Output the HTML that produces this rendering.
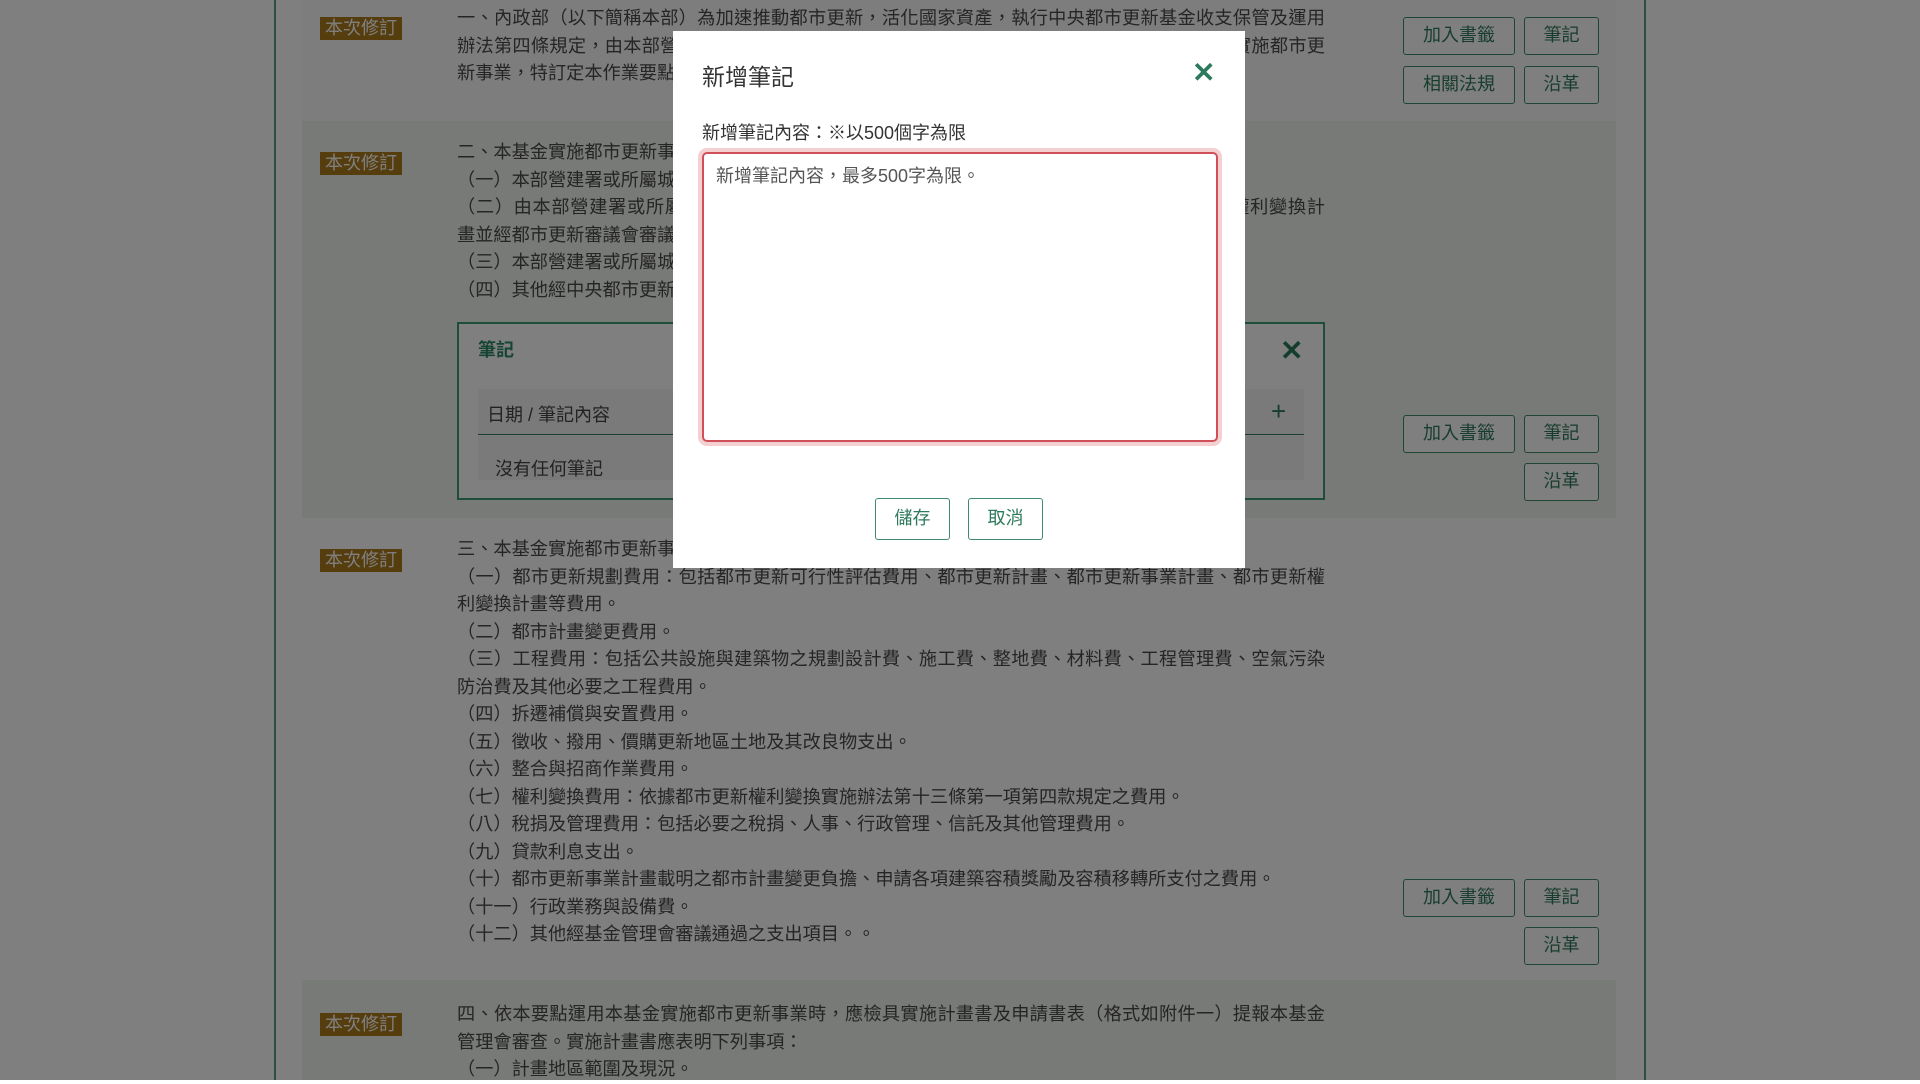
<!DOCTYPE html>
<html><head><meta charset="utf-8"><style>
*{box-sizing:border-box;margin:0;padding:0}
body{width:1920px;height:1080px;overflow:hidden;background:#fff;font-family:"Liberation Sans","Noto Sans CJK TC",sans-serif;position:relative;color:#555}
.wrap{position:absolute;left:274px;top:0;width:1372px;height:1080px;border-left:2px solid #5c9c84;border-right:2px solid #5c9c84;background:#fff}
.row{position:absolute;left:302px;width:1314px}
.badge{position:absolute;left:320px;width:82px;height:23px;background:#ab7a1c;color:#fff;font-size:18px;line-height:23px;text-align:center}
.txt{position:absolute;left:457px;width:868px;font-size:18.2px;line-height:27.5px;color:#4a4a4a;white-space:nowrap}
.txt .j{display:block;text-align:justify;text-align-last:justify;text-justify:inter-character}
.btn{position:absolute;height:38px;border:1.5px solid #3f8a6c;border-radius:3px;background:#fff;color:#2e7a5c;font-size:18px;line-height:35px;text-align:center}
.overlay{position:absolute;left:0;top:0;width:1920px;height:1080px;background:rgba(0,0,0,.5)}
.dlg{position:absolute;left:673px;top:31px;width:572px;height:537px;background:#fff}
</style></head><body>
<div class="wrap"></div>
<div class="row" style="top:0;height:121px;background:#fbfbfb"></div>
<div class="row" style="top:121px;height:397px;background:#f0f4ee"></div>
<div class="row" style="top:518px;height:462px;background:#fff"></div>
<div class="row" style="top:980px;height:100px;background:#f0f4ee"></div>

<div class="badge" style="top:17px">本次修訂</div>
<div class="txt" style="top:5px"><span class="j">一、內政部（以下簡稱本部）為加速推動都市更新，活化國家資產，執行中央都市更新基金收支保管及運用</span><span class="j">辦法第四條規定，由本部營建署或所屬城鄉發展分署（以下簡稱城鄉分署）辦理公辦都市更新及實施都市更</span>新事業，特訂定本作業要點。</div>
<div class="btn" style="left:1403px;top:17px;width:112px">加入書籤</div>
<div class="btn" style="left:1524px;top:17px;width:75px">筆記</div>
<div class="btn" style="left:1403px;top:66px;width:112px">相關法規</div>
<div class="btn" style="left:1524px;top:66px;width:75px">沿革</div>

<div class="badge" style="top:152px">本次修訂</div>
<div class="txt" style="top:139px">二、本基金實施都市更新事業之範圍如下：<br>（一）本部營建署或所屬城鄉分署擔任實施者。<br><span class="j">（二）由本部營建署或所屬城鄉分署擔任實施者之都市更新事業計畫擬具都市更新事業計畫及權利變換計</span>畫並經都市更新審議會審議通過者。<br>（三）本部營建署或所屬城鄉分署辦理之公辦都更。<br>（四）其他經中央都市更新基金管理會同意者。</div>
<div style="position:absolute;left:457px;top:322px;width:868px;height:178px;border:2.5px solid #3f9a78;background:#fff"></div>
<div style="position:absolute;left:478px;top:336px;font-size:18px;font-weight:bold;color:#2e8a68">筆記</div>
<div style="position:absolute;left:1280px;top:334px;font-size:28px;font-weight:bold;color:#2b7a5c">✕</div>
<div style="position:absolute;left:478px;top:389px;width:826px;height:46px;background:#f4f4f4;border-bottom:1.5px solid #2e7a5c"></div>
<div style="position:absolute;left:487px;top:401px;font-size:18px;color:#444">日期 / 筆記內容</div>
<div style="position:absolute;left:1271px;top:396px;font-size:26px;color:#2e7a5c">+</div>
<div style="position:absolute;left:478px;top:436px;width:826px;height:44px;background:#f4f4f4"></div>
<div style="position:absolute;left:495px;top:455px;font-size:18px;color:#444">沒有任何筆記</div>
<div class="btn" style="left:1403px;top:415px;width:112px">加入書籤</div>
<div class="btn" style="left:1524px;top:415px;width:75px">筆記</div>
<div class="btn" style="left:1524px;top:463px;width:75px">沿革</div>

<div class="badge" style="top:549px">本次修訂</div>
<div class="txt" style="top:536px">三、本基金實施都市更新事業之支出範圍如下：<br><span class="j">（一）都市更新規劃費用：包括都市更新可行性評估費用、都市更新計畫、都市更新事業計畫、都市更新權</span>利變換計畫等費用。<br>（二）都市計畫變更費用。<br><span class="j">（三）工程費用：包括公共設施與建築物之規劃設計費、施工費、整地費、材料費、工程管理費、空氣污染</span>防治費及其他必要之工程費用。<br>（四）拆遷補償與安置費用。<br>（五）徵收、撥用、價購更新地區土地及其改良物支出。<br>（六）整合與招商作業費用。<br>（七）權利變換費用：依據都市更新權利變換實施辦法第十三條第一項第四款規定之費用。<br>（八）稅捐及管理費用：包括必要之稅捐、人事、行政管理、信託及其他管理費用。<br>（九）貸款利息支出。<br>（十）都市更新事業計畫載明之都市計畫變更負擔、申請各項建築容積獎勵及容積移轉所支付之費用。<br>（十一）行政業務與設備費。<br>（十二）其他經基金管理會審議通過之支出項目。。</div>
<div class="btn" style="left:1403px;top:879px;width:112px">加入書籤</div>
<div class="btn" style="left:1524px;top:879px;width:75px">筆記</div>
<div class="btn" style="left:1524px;top:927px;width:75px">沿革</div>

<div class="badge" style="top:1013px">本次修訂</div>
<div class="txt" style="top:1001px"><span class="j">四、依本要點運用本基金實施都市更新事業時，應檢具實施計畫書及申請書表（格式如附件一）提報本基金</span>管理會審查。實施計畫書應表明下列事項：<br>（一）計畫地區範圍及現況。</div>

<div class="overlay"></div>
<div class="dlg">
<div style="position:absolute;left:29px;top:27px;font-size:23px;color:#333">新增筆記</div>
<div style="position:absolute;left:519px;top:25px;font-size:28px;font-weight:bold;color:#2b7a5c">✕</div>
<div style="position:absolute;left:29px;top:88px;font-size:18px;color:#333">新增筆記內容：※以500個字為限</div>
<div style="position:absolute;left:29px;top:121px;width:516px;height:290px;border:2px solid #d0505a;border-radius:5px;box-shadow:0 0 0 4px rgba(220,100,110,.3)"></div>
<div style="position:absolute;left:43px;top:131px;font-size:18px;color:#555">新增筆記內容，最多500字為限。</div>
<div class="btn" style="left:202px;top:467px;width:75px;height:42px;line-height:39px">儲存</div>
<div class="btn" style="left:295px;top:467px;width:75px;height:42px;line-height:39px">取消</div>
</div>
</body></html>
